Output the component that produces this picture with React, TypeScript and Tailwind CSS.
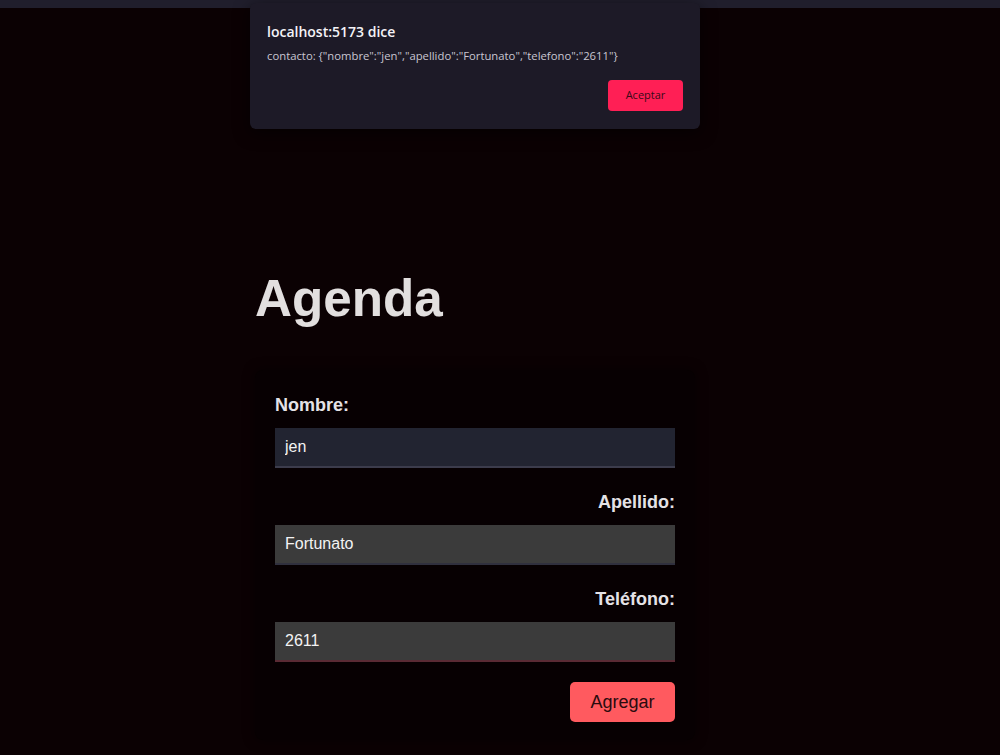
import { useState } from 'react';

export default function App() {
  const [form, setForm] = useState({ nombre: 'jen', apellido: 'Fortunato', telefono: '2611' });

  const handleChange = (e: React.ChangeEvent<HTMLInputElement>) => {
    setForm({ ...form, [e.target.name]: e.target.value });
  };

  return (
    <div className="relative min-h-[755px] w-full bg-[#0b0103] font-['Liberation_Sans',Arial,sans-serif]">
      {/* browser strip */}
      <div className="h-[8px] w-full bg-[#201e2c]" />

      <main className="ml-[255px] w-[440px] pt-[263px]">
        <h1 className="text-[51.2px] font-bold leading-[1.1] text-[#e2dfdf]">Agenda</h1>

        <form
          className="mt-[43px] rounded-lg bg-[#070002] px-5 pt-[23px] pb-[18px] shadow-[0_0_12px_rgba(0,0,0,0.5)]"
          onSubmit={(e) => e.preventDefault()}
        >
          <label htmlFor="nombre" className="block text-[18px] font-bold leading-6 text-[#e4e2e6]">
            Nombre:
          </label>
          <input
            id="nombre"
            name="nombre"
            value={form.nombre}
            onChange={handleChange}
            className="mt-[11px] block h-10 w-full border-b-2 border-[#3c3c4c] bg-[#222431] px-[10px] text-[16px] text-[#f3f3f3] outline-none"
          />

          <label htmlFor="apellido" className="mt-[22px] block text-right text-[18px] font-bold leading-6 text-[#e4e2e6]">
            Apellido:
          </label>
          <input
            id="apellido"
            name="apellido"
            value={form.apellido}
            onChange={handleChange}
            className="mt-[11px] block h-10 w-full border-b-2 border-[#30303e] bg-[#3b3b3b] px-[10px] text-[16px] text-[#f3f3f3] outline-none"
          />

          <label htmlFor="telefono" className="mt-[22px] block text-right text-[18px] font-bold leading-6 text-[#e4e2e6]">
            Teléfono:
          </label>
          <input
            id="telefono"
            name="telefono"
            value={form.telefono}
            onChange={handleChange}
            className="mt-[11px] block h-10 w-full border-b-2 border-[#5a2a34] bg-[#3b3b3b] px-[10px] text-[16px] text-[#f3f3f3] outline-none"
          />

          <div className="mt-5 flex justify-end">
            <button
              type="submit"
              className="h-10 w-[105px] rounded-[5px] bg-[#ff5a5f] text-[18px] text-[#2a0b0e]"
            >
              Agregar
            </button>
          </div>
        </form>
      </main>

      {/* alert dialog */}
      <div className="absolute left-[250px] top-[3px] w-[450px] rounded-md bg-[#1d1a27] px-[17px] pt-[19px] pb-[18px] shadow-[0_4px_16px_rgba(0,0,0,0.6)] font-['Open_Sans','Noto_Sans',sans-serif]">
        <div className="text-[14px] font-semibold leading-5 text-[#f4f3f7]">localhost:5173 dice</div>
        <div className="mt-[6px] text-[11.3px] leading-4 text-[#c9c6d2]">
          contacto: {'{"nombre":"jen","apellido":"Fortunato","telefono":"2611"}'}
        </div>
        <div className="mt-[16px] flex justify-end">
          <button className="h-[31px] w-[75px] rounded-[4px] bg-[#ff1f55] text-[11px] text-[#3a0a18]">
            Aceptar
          </button>
        </div>
      </div>
    </div>
  );
}
